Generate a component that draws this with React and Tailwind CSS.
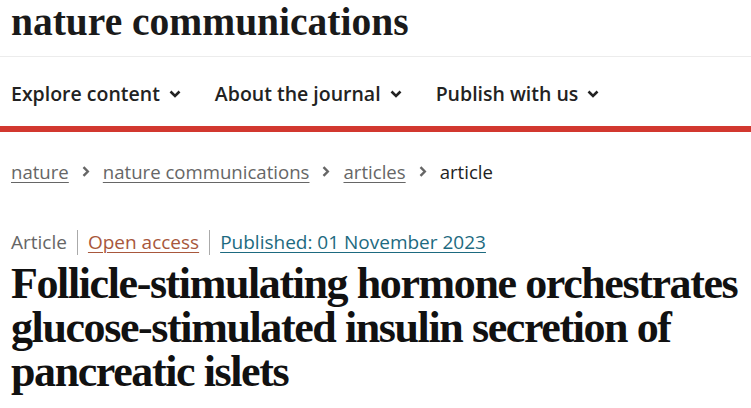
import React from "react";

const navItems = ["Explore content", "About the journal", "Publish with us"];

const crumbs = ["nature", "nature communications", "articles"];

function Caret() {
  return (
    <svg width="12" height="8" viewBox="0 0 12 8" className="text-[#222]">
      <polyline points="1.5,1.5 6,6 10.5,1.5" fill="none" stroke="currentColor" strokeWidth="2.6" />
    </svg>
  );
}

function Sep() {
  return (
    <svg width="8" height="11" viewBox="0 0 8 11" className="text-[#666]">
      <polyline points="1.5,1.2 5.8,5.5 1.5,9.8" fill="none" stroke="currentColor" strokeWidth="2.4" />
    </svg>
  );
}

export default function App() {
  return (
    <div className="w-[751px] h-[408px] overflow-hidden bg-white">
      {/* logo */}
      <header className="h-[57px] border-b border-[#ececec] px-[11px]">
        <div className="font-['Liberation_Serif',serif] font-bold text-[39.5px] leading-none text-[#1a1a1a] pt-[3px]">
          nature communications
        </div>
      </header>

      {/* nav */}
      <nav className="h-[69px] flex items-center gap-[34px] px-[11px] pt-[4px] font-['Open_Sans',sans-serif] font-semibold text-[19.5px] text-[#222]">
        {navItems.map((item) => (
          <div key={item} className="flex items-center gap-[9px]">
            <span>{item}</span>
            <Caret />
          </div>
        ))}
      </nav>
      <div className="h-[6px] bg-[#d2382f]" />

      {/* breadcrumbs */}
      <div className="flex items-center gap-[13px] px-[11px] pt-[26px] font-['Open_Sans',sans-serif] text-[18.6px] text-[#666]">
        {crumbs.map((c) => (
          <React.Fragment key={c}>
            <a className="underline underline-offset-[3px] decoration-[1px]">{c}</a>
            <Sep />
          </React.Fragment>
        ))}
        <span className="text-[#222]">article</span>
      </div>

      {/* meta */}
      <div className="flex items-center px-[11px] pt-[42px] font-['Open_Sans',sans-serif] text-[19px]">
        <span className="text-[#666]">Article</span>
        <span className="mx-[10px] h-[25px] w-px bg-[#aaa]" />
        <a className="text-[#a8573c] underline underline-offset-[3px] decoration-[1px]">Open access</a>
        <span className="mx-[10px] h-[25px] w-px bg-[#aaa]" />
        <a className="text-[#1d6a80] underline underline-offset-[3px] decoration-[1px]">
          Published: 01 November 2023
        </a>
      </div>

      {/* title */}
      <h1 className="px-[11px] pt-[6px] font-['Liberation_Serif',serif] font-bold text-[44px] leading-[44px] tracking-[-1.4px] text-[#111]">
        Follicle-stimulating hormone orchestrates glucose-stimulated insulin secretion of pancreatic islets
      </h1>
    </div>
  );
}
